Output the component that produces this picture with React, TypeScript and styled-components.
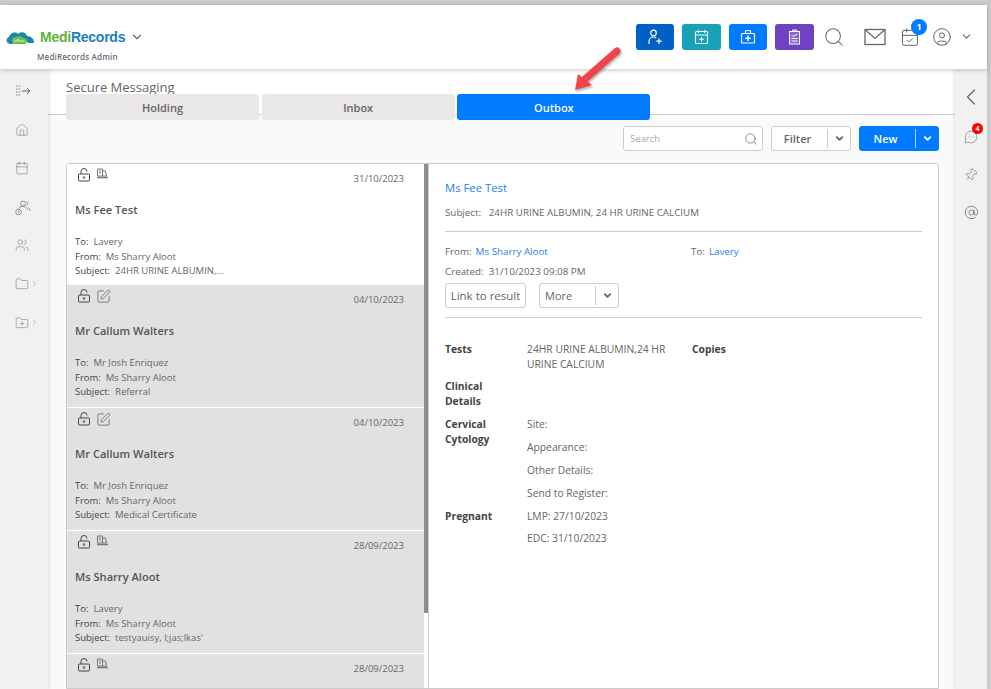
import styled, { createGlobalStyle } from "styled-components";
import {
    AtSign,
    Calendar,
    CalendarCheck,
    ChevronDown,
    ChevronLeft,
    ChevronRight,
    CircleUser,
    Folder,
    FolderPlus,
    House,
    MessageCircleMore,
    Pin,
    Search,
    SquarePen,
    Users,
} from "lucide-react";

const Global = createGlobalStyle`
    html, body {
        margin: 0;
        height: 100%;
        overflow: hidden;
    }
    body {
        font-family: "Open Sans", "Liberation Sans", sans-serif;
        color: #555;
    }
    * {
        box-sizing: border-box;
    }
`;

const Page = styled.div`
    width: 991px;
    height: 689px;
    position: relative;
    overflow: hidden;
    background: #ccc;
    padding: 5px 4px 0 0;
    display: flex;
    flex-direction: column;
`;

const Header = styled.header`
    height: 64px;
    flex: none;
    background: #fff;
    display: flex;
    align-items: flex-start;
    justify-content: space-between;
    padding: 0 14px 0 6px;
    box-shadow: 0 1px 5px rgba(0, 0, 0, 0.22);
    position: relative;
    z-index: 2;
`;

const Brand = styled.div`
    padding-top: 22px;
    display: flex;
    flex-direction: column;
`;

const BrandRow = styled.div`
    display: flex;
    align-items: center;
    height: 20px;
    color: #666;
`;

const BrandName = styled.span`
    font-family: "Liberation Sans", Arial, sans-serif;
    font-weight: 700;
    font-size: 14px;
    letter-spacing: -0.25px;
    margin: 0 5px 0 5px;
    color: #1b7fc0;
`;

const BrandGreen = styled.span`
    color: #5cb531;
`;

const BrandSub = styled.div`
    font-size: 8px;
    font-weight: 600;
    color: #666c78;
    margin: 4px 0 0 31px;
    letter-spacing: 0.2px;
`;

const HeaderRight = styled.div`
    display: flex;
    align-items: center;
    height: 100%;
    padding-bottom: 1px;
`;

const ActionButton = styled.button<{ $bg: string; $w: number; $gap: number }>`
    width: ${(p) => p.$w}px;
    height: 26px;
    border: 0;
    border-radius: 3px;
    background: ${(p) => p.$bg};
    color: #fff;
    margin-right: ${(p) => p.$gap}px;
    display: flex;
    align-items: center;
    justify-content: center;
    padding: 0;
`;

const IconSlot = styled.div<{ $w: number }>`
    width: ${(p) => p.$w}px;
    display: flex;
    justify-content: center;
    align-items: center;
    position: relative;
    color: #666;
`;

const HeaderBadge = styled.span`
    position: absolute;
    top: -8px;
    right: -3px;
    width: 16px;
    height: 16px;
    border-radius: 50%;
    background: #007bff;
    color: #fff;
    font-size: 9px;
    font-weight: 700;
    display: flex;
    align-items: center;
    justify-content: center;
`;

const Body = styled.div`
    flex: 1;
    display: flex;
    min-height: 0;
`;

const Sidebar = styled.nav`
    width: 48px;
    flex: none;
    background: #f1f1f1;
    box-shadow: 1px 0 4px rgba(0, 0, 0, 0.12);
    display: flex;
    flex-direction: column;
    padding-top: 15px;
    position: relative;
    z-index: 1;
`;

const SideItem = styled.div`
    height: 38.6px;
    display: flex;
    align-items: flex-start;
    padding-left: 15px;
    color: #777;
    gap: 1px;
`;

const Main = styled.main`
    flex: 1;
    min-width: 0;
    background: #fafafa;
    display: flex;
    flex-direction: column;
`;

const TopArea = styled.div`
    height: 46px;
    flex: none;
    background: #fff;
    border-bottom: 1px solid #ccc;
    padding: 10px 0 0 18px;
`;

const Title = styled.div`
    font-size: 13px;
    line-height: 16px;
    color: #666;
`;

const Tabs = styled.div`
    display: flex;
    gap: 2.7px;
    margin-top: -1px;
`;

const Tab = styled.div<{ $active?: boolean }>`
    width: 193px;
    height: 26px;
    border-radius: 3px;
    background: ${(p) => (p.$active ? "#007bff" : "#e9e7e7")};
    color: ${(p) => (p.$active ? "#fff" : "#666")};
    font-size: 11px;
    font-weight: 600;
    display: flex;
    align-items: center;
    justify-content: center;
    position: relative;
`;

const Toolbar = styled.div`
    height: 48px;
    flex: none;
    display: flex;
    justify-content: flex-end;
    padding: 11px 16px 0 0;
`;

const SearchBox = styled.div`
    width: 140px;
    height: 25px;
    border: 1px solid #ccc;
    border-radius: 3px;
    background: #fff;
    display: flex;
    align-items: center;
    justify-content: space-between;
    padding: 0 4px 0 6px;
    font-size: 9.5px;
    color: #aaa;
    margin-right: 8px;
`;

const SplitButton = styled.div<{ $primary?: boolean; $w: number; $mr?: number; $plain?: boolean }>`
    width: ${(p) => p.$w}px;
    height: 25px;
    margin-right: ${(p) => p.$mr ?? 0}px;
    border: 1px solid ${(p) => (p.$primary ? "#007bff" : "#ccc")};
    border-radius: 3px;
    background: ${(p) => (p.$primary ? "#007bff" : "#fff")};
    color: ${(p) => (p.$primary ? "#fff" : "#666")};
    display: flex;
    align-items: center;
    font-size: 11px;
    font-weight: ${(p) => (p.$plain ? 400 : 600)};
`;

const SplitLabel = styled.span<{ $center?: boolean }>`
    flex: 1;
    text-align: ${(p) => (p.$center ? "center" : "left")};
    padding: ${(p) => (p.$center ? "0 4px 0 0" : "0 0 0 5px")};
`;

const SplitCaret = styled.span<{ $primary?: boolean }>`
    width: 23px;
    height: 19px;
    border-left: 1px solid ${(p) => (p.$primary ? "#b9d8fb" : "#ccc")};
    display: flex;
    align-items: center;
    justify-content: center;
`;

const Panel = styled.section`
    flex: 1;
    min-height: 0;
    margin: 0 16px 0 18px;
    background: #fff;
    border: 1px solid #ccc;
    border-radius: 3px 3px 0 0;
    display: flex;
    overflow: hidden;
`;

const List = styled.div`
    width: 357px;
    flex: none;
    overflow: hidden;
`;

const ScrollTrack = styled.div`
    width: 4px;
    flex: none;
    background: #fff;
`;

const ScrollThumb = styled.div`
    height: 449px;
    background: #8d8d8d;
`;

const ListRow = styled.article<{ $selected?: boolean }>`
    height: 123px;
    background: ${(p) => (p.$selected ? "#fff" : "#e1e1e1")};
    border-bottom: 1px solid #fff;
    padding: 4px 20px 0 8px;
    display: flex;
    flex-direction: column;

    &:first-child {
        height: 121px;
        border-bottom: 0;
    }
`;

const RowTop = styled.div`
    display: flex;
    justify-content: space-between;
    height: 20px;
    font-size: 9.5px;
    color: #666;
`;

const RowIcons = styled.div`
    display: flex;
    align-items: flex-start;
    gap: 5px;
    padding-left: 2px;
    color: #555;
`;

const RowDate = styled.span`
    padding-top: 4px;
`;

const RowName = styled.div`
    font-size: 11.1px;
    font-weight: 600;
    color: #555;
    margin-top: 15px;
    line-height: 14px;
`;

const RowMeta = styled.div`
    margin-top: 18px;
    font-size: 9.5px;
    line-height: 14.5px;
    color: #666;
`;

const MetaLabel = styled.span`
    color: #444;
    margin-right: 5px;
`;

const Detail = styled.div`
    flex: 1;
    min-width: 0;
    border-left: 1px solid #ccc;
    padding: 16px 16px 0 16px;
`;

const DetailName = styled.div`
    font-size: 11.3px;
    line-height: 16px;
    color: #2a7dee;
`;

const DetailLine = styled.div<{ $mt: number }>`
    font-size: 9.8px;
    line-height: 14px;
    color: #666;
    margin-top: ${(p) => p.$mt}px;
    display: flex;
`;

const Rule = styled.hr<{ $mt: number }>`
    border: 0;
    border-top: 1px solid #ccc;
    margin: ${(p) => p.$mt}px 0 0;
`;

const Half = styled.span`
    width: 246px;
`;

const Link = styled.span`
    color: #2a7dee;
    margin-left: 4px;
`;

const ButtonRow = styled.div`
    display: flex;
    gap: 13px;
    margin-top: 4px;
`;

const OutlineButton = styled.div`
    height: 25px;
    width: 81px;
    border: 1px solid #ccc;
    border-radius: 3px;
    font-size: 11.5px;
    color: #666;
    display: flex;
    align-items: center;
    justify-content: center;
    white-space: nowrap;
`;

const InfoGrid = styled.div`
    display: grid;
    grid-template-columns: 82px 165px 1fr;
    margin-top: 24px;
    font-size: 10.3px;
    line-height: 15px;
    color: #666;
`;

const InfoLabel = styled.div<{ $mb?: number }>`
    font-weight: 700;
    color: #444;
    width: 56px;
    margin-bottom: ${(p) => p.$mb ?? 0}px;
`;

const InfoValue = styled.div`
    padding-right: 8px;
    margin-bottom: 7px;
`;

const InfoCell = styled.div<{ $mb?: number }>`
    margin-bottom: ${(p) => p.$mb ?? 0}px;
`;

const RightRail = styled.aside`
    width: 32px;
    flex: none;
    background: #f1f1f1;
    box-shadow: -1px 0 3px rgba(0, 0, 0, 0.1);
    display: flex;
    flex-direction: column;
    align-items: center;
    padding-top: 14px;
    color: #666;
    position: relative;
    z-index: 1;
`;

const RailItem = styled.div<{ $h: number }>`
    height: ${(p) => p.$h}px;
    position: relative;
`;

const RailBadge = styled.span`
    position: absolute;
    top: -4px;
    right: -5px;
    width: 11px;
    height: 11px;
    border-radius: 50%;
    background: #f00;
    color: #fff;
    font-size: 7px;
    font-weight: 700;
    display: flex;
    align-items: center;
    justify-content: center;
`;

const ArrowMark = styled.svg`
    position: absolute;
    left: 113px;
    top: -48px;
    z-index: 5;
    filter: drop-shadow(1px 2px 1px rgba(0, 0, 0, 0.3));
`;

function Logo() {
    return (
        <svg width="29" height="17" viewBox="0 0 29 17">
            <path d="M2 14c-2-1-2-5 1-6 1-4 6-6 9-3 3-3 8-2 9 2 4 0 7 3 7 6 0 1-1 1-2 1H22v-1H7v2C5 15 3 15 2 14Z" fill="#1a86a8" />
            <path d="M6 11c0-2 2-3 4-3 2-1 6-1 7 1 2 0 4 1 4 3s-1 3-3 3H9c-2 0-3-2-3-4Z" fill="#6cc04a" />
            <path d="M8 12h3l1-2 1.5 3 1-1h4" stroke="#fff" strokeWidth="0.8" fill="none" />
        </svg>
    );
}

function ExpandIcon() {
    return (
        <svg width="16" height="14" viewBox="0 0 16 14" fill="none" stroke="#888" strokeWidth="1">
            <path d="M1 2h5M1 5h5M1 8h5M1 11h5" strokeDasharray="1 .6" />
            <path d="M7 7h8M12 4l3 3-3 3" stroke="#666" />
        </svg>
    );
}

function PatientsIcon() {
    return (
        <svg width="16" height="16" viewBox="0 0 16 16" fill="none" stroke="#888" strokeWidth="0.9">
            <circle cx="8" cy="3.5" r="2.5" />
            <path d="M11.5 1.5a2.2 2.2 0 0 1 0 4M13.5 7.5c1 .8 1.5 2 1.5 3.5M3.5 9c.4-1.5 2-2.5 4.5-2.5S12 7.5 12.5 10" />
            <circle cx="3.5" cy="12" r="2.8" />
            <path d="M3.5 10.5V12h1.3" />
        </svg>
    );
}

function UserAddIcon() {
    return (
        <svg width="16" height="16" viewBox="0 0 16 16" fill="none" stroke="#fff" strokeWidth="1.2">
            <circle cx="6.5" cy="4" r="2.8" />
            <path d="M2 15v-2.5c0-2.5 2-4.500 4.500-4.500 1 0 2 .3 2.700 1" />
            <path d="M12 9.500v5.500M9.300 12.200h5.400" />
        </svg>
    );
}

function CalendarAddIcon() {
    return (
        <svg width="15" height="16" viewBox="0 0 15 16" fill="none" stroke="#fff" strokeWidth="1.1">
            <rect x="1.5" y="2.5" width="12" height="12" rx="1" />
            <path d="M1.500 6h12M4.500 1v3M10.500 1v3M7.500 8v4.500M5.200 10.200h4.600" />
        </svg>
    );
}

function KitIcon() {
    return (
        <svg width="16" height="15" viewBox="0 0 16 15" fill="none" stroke="#fff" strokeWidth="1.2">
            <rect x="1.5" y="4.5" width="13" height="9.5" rx="1" />
            <path d="M5.500 4.500v-2a1 1 0 0 1 1-1h3a1 1 0 0 1 1 1v2" />
            <path d="M8 6.500v5.500M5.300 9.200h5.400" strokeWidth="1.5" />
        </svg>
    );
}

function ChecklistIcon() {
    return (
        <svg width="13" height="16" viewBox="0 0 13 16" fill="none" stroke="#fff" strokeWidth="1">
            <rect x="1.5" y="2.5" width="10" height="12.5" fill="rgba(255,255,255,0.18)" />
            <path d="M4.500 2.500V1h4v1.500" />
            <path d="M3.500 6l1.500 1.500L9.500 5M3.500 9.500h6M3.500 12h6" />
        </svg>
    );
}

function MailIcon() {
    return (
        <svg width="22" height="18" viewBox="0 0 22 18" fill="none" stroke="#666" strokeWidth="1.3">
            <rect x="1" y="1.5" width="20" height="15" />
            <path d="M1 1.500l10 9 10-9" />
        </svg>
    );
}

function LockDown() {
    return (
        <svg width="14" height="14" viewBox="0 0 14 14" fill="none" stroke="#444" strokeWidth="1">
            <rect x="1.5" y="6" width="11" height="7" rx="1" />
            <path d="M4 6V3.500a3 3 0 0 1 6 0" />
            <path d="M7 8v2.500M6 9.500l1 1 1-1" />
        </svg>
    );
}

function ResultIcon() {
    return (
        <svg width="13" height="11" viewBox="0 0 13 11" fill="none" stroke="#777" strokeWidth="1">
            <path d="M1.500 1h5v7h-5zM3 3h2M3 5h2" />
            <path d="M6.500 3h3l1 5h-4" />
            <path d="M1 9.500h11" strokeWidth="1.5" />
        </svg>
    );
}

type Message = {
    date: string;
    name?: string;
    to?: string;
    subject?: string;
    edit?: boolean;
};

const messages: Message[] = [
    { date: "31/10/2023", name: "Ms Fee Test", to: "Lavery", subject: "24HR URINE ALBUMIN,..." },
    { date: "04/10/2023", name: "Mr Callum Walters", to: "Mr Josh Enriquez", subject: "Referral", edit: true },
    { date: "04/10/2023", name: "Mr Callum Walters", to: "Mr Josh Enriquez", subject: "Medical Certificate", edit: true },
    { date: "28/09/2023", name: "Ms Sharry Aloot", to: "Lavery", subject: "testyauisy, l;jas;lkas'" },
    { date: "28/09/2023" },
];

export default function App() {
    return (
        <Page>
            <Global />
            <Header>
                <Brand>
                    <BrandRow>
                        <Logo />
                        <BrandName>
                            <BrandGreen>Medi</BrandGreen>Records
                        </BrandName>
                        <ChevronDown size={14} />
                    </BrandRow>
                    <BrandSub>MediRecords Admin</BrandSub>
                </Brand>
                <HeaderRight>
                    <ActionButton $bg="#0060c4" $w={38} $gap={8}>
                        <UserAddIcon />
                    </ActionButton>
                    <ActionButton $bg="#17a2b8" $w={39} $gap={8}>
                        <CalendarAddIcon />
                    </ActionButton>
                    <ActionButton $bg="#007bff" $w={38} $gap={8}>
                        <KitIcon />
                    </ActionButton>
                    <ActionButton $bg="#6f42c1" $w={39} $gap={0}>
                        <ChecklistIcon />
                    </ActionButton>
                    <IconSlot $w={40}>
                        <Search size={22} strokeWidth={1.1} />
                    </IconSlot>
                    <IconSlot $w={42}>
                        <MailIcon />
                    </IconSlot>
                    <IconSlot $w={28}>
                        <CalendarCheck size={20} strokeWidth={1.2} />
                        <HeaderBadge>1</HeaderBadge>
                    </IconSlot>
                    <IconSlot $w={36}>
                        <CircleUser size={20} strokeWidth={1.2} />
                    </IconSlot>
                    <ChevronDown size={13} color="#666" />
                </HeaderRight>
            </Header>
            <Body>
                <Sidebar>
                    <SideItem><ExpandIcon /></SideItem>
                    <SideItem><House size={14} strokeWidth={1} /></SideItem>
                    <SideItem><Calendar size={14} strokeWidth={1} /></SideItem>
                    <SideItem><PatientsIcon /></SideItem>
                    <SideItem><Users size={14} strokeWidth={1} /></SideItem>
                    <SideItem>
                        <Folder size={14} strokeWidth={1} />
                        <ChevronRight size={9} color="#aaa" style={{ marginTop: 2 }} />
                    </SideItem>
                    <SideItem>
                        <FolderPlus size={14} strokeWidth={1} />
                        <ChevronRight size={9} color="#aaa" style={{ marginTop: 2 }} />
                    </SideItem>
                </Sidebar>
                <Main>
                    <TopArea>
                        <Title>Secure Messaging</Title>
                        <Tabs>
                            <Tab>Holding</Tab>
                            <Tab>Inbox</Tab>
                            <Tab $active>
                                Outbox
                                <ArrowMark width="55" height="50" viewBox="0 0 55 50">
                                    <path d="M15 33 47 5" stroke="#f0444a" strokeWidth="7" strokeLinecap="round" />
                                    <path d="M5 44 8 28 22 39Z" fill="#f0444a" />
                                </ArrowMark>
                            </Tab>
                        </Tabs>
                    </TopArea>
                    <Toolbar>
                        <SearchBox>
                            Search
                            <Search size={14} strokeWidth={1.2} color="#666" />
                        </SearchBox>
                        <SplitButton $w={80} $mr={8}>
                            <SplitLabel $center>Filter</SplitLabel>
                            <SplitCaret><ChevronDown size={11} strokeWidth={4} /></SplitCaret>
                        </SplitButton>
                        <SplitButton $primary $w={80}>
                            <SplitLabel $center>New</SplitLabel>
                            <SplitCaret $primary><ChevronDown size={11} strokeWidth={4} /></SplitCaret>
                        </SplitButton>
                    </Toolbar>
                    <Panel>
                        <List>
                            {messages.map((m, i) => (
                                <ListRow key={i} $selected={i === 0}>
                                    <RowTop>
                                        <RowIcons>
                                            <LockDown />
                                            {m.edit ? <SquarePen size={15} strokeWidth={1.1} /> : <ResultIcon />}
                                        </RowIcons>
                                        <RowDate>{m.date}</RowDate>
                                    </RowTop>
                                    {m.name && (
                                        <>
                                            <RowName>{m.name}</RowName>
                                            <RowMeta>
                                                <div><MetaLabel>To:</MetaLabel>{m.to}</div>
                                                <div><MetaLabel>From:</MetaLabel>Ms Sharry Aloot</div>
                                                <div><MetaLabel>Subject:</MetaLabel>{m.subject}</div>
                                            </RowMeta>
                                        </>
                                    )}
                                </ListRow>
                            ))}
                        </List>
                        <ScrollTrack><ScrollThumb /></ScrollTrack>
                        <Detail>
                            <DetailName>Ms Fee Test</DetailName>
                            <DetailLine $mt={10}>Subject:&nbsp;&nbsp;&nbsp;24HR URINE ALBUMIN, 24 HR URINE CALCIUM</DetailLine>
                            <Rule $mt={11} />
                            <DetailLine $mt={13}>
                                <Half>From:<Link>Ms Sharry Aloot</Link></Half>
                                <span>To:<Link>Lavery</Link></span>
                            </DetailLine>
                            <DetailLine $mt={6}>Created:&nbsp;&nbsp;31/10/2023 09:08 PM</DetailLine>
                            <ButtonRow>
                                <OutlineButton>Link to result</OutlineButton>
                                <SplitButton $w={80} $plain>
                                    <SplitLabel>More</SplitLabel>
                                    <SplitCaret><ChevronDown size={11} strokeWidth={4} /></SplitCaret>
                                </SplitButton>
                            </ButtonRow>
                            <Rule $mt={9} />
                            <InfoGrid>
                                <InfoLabel>Tests</InfoLabel>
                                <InfoValue>24HR URINE ALBUMIN,24 HR URINE CALCIUM</InfoValue>
                                <InfoLabel>Copies</InfoLabel>
                                <InfoLabel $mb={8}>Clinical Details</InfoLabel>
                                <div />
                                <div />
                                <InfoLabel>Cervical Cytology</InfoLabel>
                                <div>
                                    <InfoCell $mb={8}>Site:</InfoCell>
                                    <InfoCell $mb={8}>Appearance:</InfoCell>
                                    <InfoCell $mb={8}>Other Details:</InfoCell>
                                    <InfoCell $mb={8}>Send to Register:</InfoCell>
                                </div>
                                <div />
                                <InfoLabel>Pregnant</InfoLabel>
                                <div>
                                    <InfoCell $mb={7}>LMP: 27/10/2023</InfoCell>
                                    <InfoCell>EDC: 31/10/2023</InfoCell>
                                </div>
                                <div />
                            </InfoGrid>
                        </Detail>
                    </Panel>
                </Main>
                <RightRail>
                    <RailItem $h={44}><ChevronLeft size={28} strokeWidth={1.1} /></RailItem>
                    <RailItem $h={38}>
                        <MessageCircleMore size={14} strokeWidth={1} />
                        <RailBadge>4</RailBadge>
                    </RailItem>
                    <RailItem $h={38}><Pin size={14} strokeWidth={1} style={{ transform: "rotate(40deg)" }} /></RailItem>
                    <RailItem $h={30}><AtSign size={15} strokeWidth={1.2} /></RailItem>
                </RightRail>
            </Body>
        </Page>
    );
}
